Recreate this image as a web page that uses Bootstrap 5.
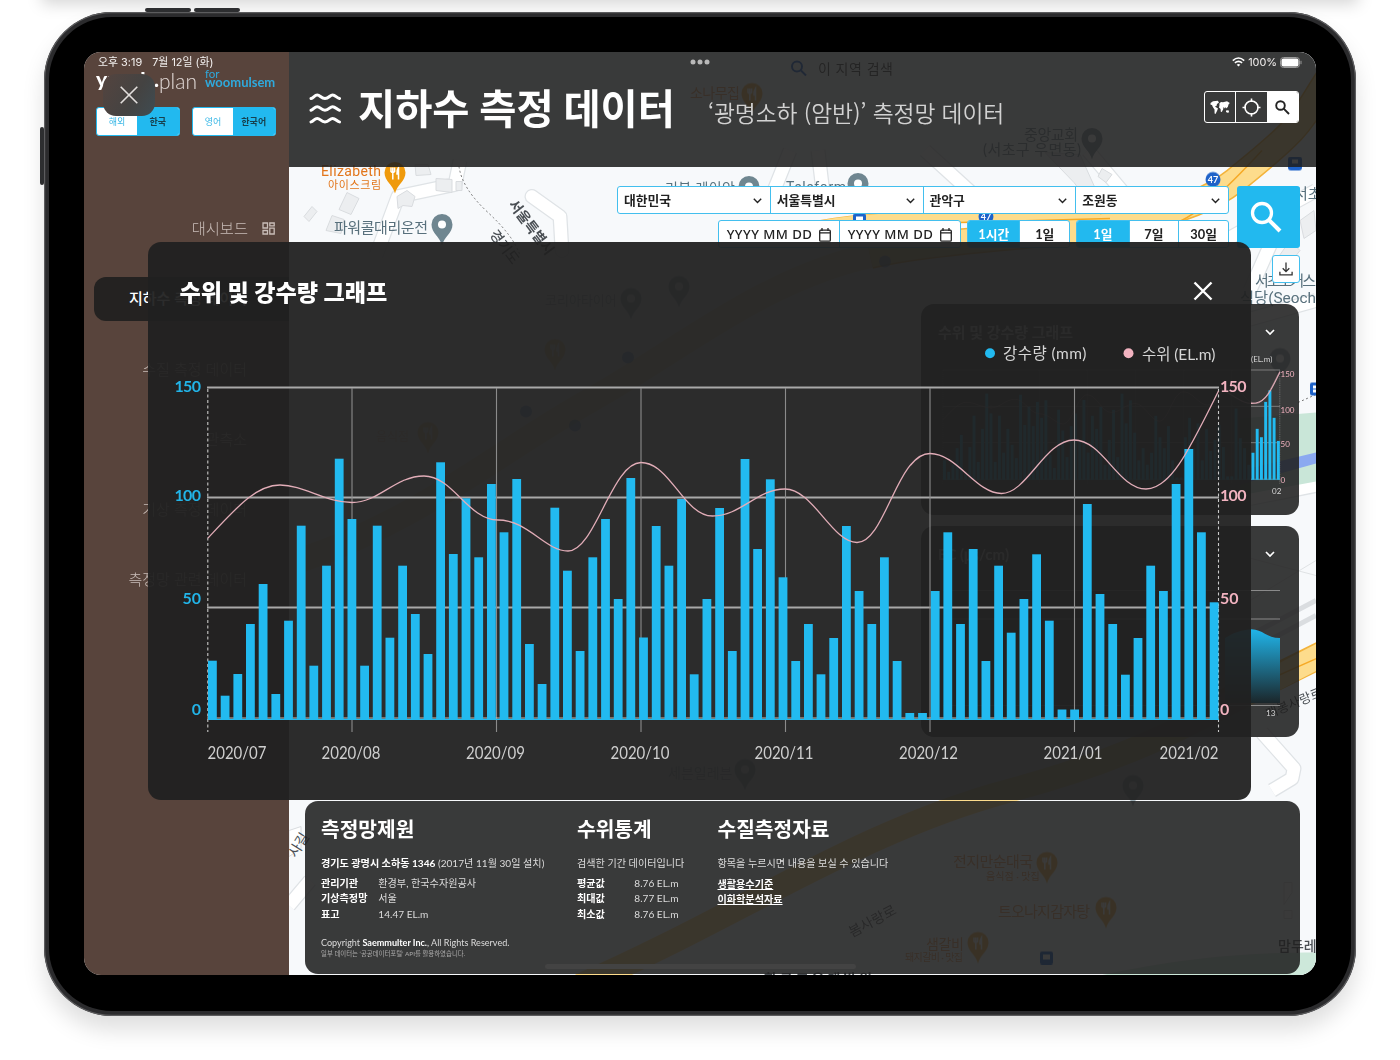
<!DOCTYPE html>
<html lang="ko">
<head>
<meta charset="utf-8">
<meta name="viewport" content="width=device-width, initial-scale=1">
<title>지하수 측정 데이터</title>
<link href="https://cdn.jsdelivr.net/npm/bootstrap@5.3.0/dist/css/bootstrap.min.css" rel="stylesheet">
<style>
:root{--cy:#22b9ef;--pk:#f2b3c0}
html,body{height:1060px;overflow:hidden}
body{background:#fff;font-family:Lato,"Noto Sans CJK KR",sans-serif;line-height:1;position:relative}
.topfade{position:absolute;left:50px;right:50px;top:-20px;height:16px;box-shadow:0 0 16px 8px rgba(0,0,0,.17)}
.device{position:relative;width:1312px;height:1004px;margin:11.5px 0 0 44px;padding:5px;border-radius:68px;background:#2b2b2d;box-shadow:inset 0 0 0 1.2px #5c5c5e,0 14px 22px rgba(0,0,0,.13)}
.side-btn{position:absolute;background:#2d2e30;border-radius:2px}
.bezel{height:100%;background:#000;border-radius:63px;padding:35px 35px 35.5px 35px}
.screen{position:relative;width:1232px;height:923px;border-radius:17px;overflow:hidden;background:#f6f8fa}
.map{position:absolute;left:205px;top:0}
.status{position:absolute;left:0;right:0;top:0;height:21px;padding:0 14px 0 14px;color:#f4f1f0;font-family:Inter,"Noto Sans CJK KR",sans-serif;font-size:10.9px;z-index:4}
.status>div{flex:1}
.sidebar{width:205px;background:#58443c;z-index:1}
.brand{height:55.500px;padding:17px 0 0 12px;color:#fff}
.brand-a{font-size:21px;font-weight:900;width:63px;height:22px;overflow:hidden;line-height:14px;margin-top:3px}
.brand-b{font-size:21px;font-weight:300;color:#e2dad7;width:46px;line-height:24px}
.brand-c{font-size:13px;font-weight:700;color:#2fa9dc;line-height:9.5px}
.brand-c small{font-size:11.5px;font-weight:400;display:block}
.hide-btn{position:absolute;left:19px;top:22px;width:52px;height:42px;border-radius:13px;background:linear-gradient(120deg,#54443f,#444342 60%,#3f4c52);z-index:3}
.tog{width:83.500px;height:28.500px;border:1px solid var(--cy);border-radius:3px;overflow:hidden;font-size:9px;background:#fff}
.tog span{display:flex;align-items:center;justify-content:center;color:#38b7e6;width:40px}
.tog span.on{background:var(--cy);color:#17414f;font-weight:700;flex:1}
.menu{padding-top:71px}
.menu a{height:44px;margin-bottom:26.3px;padding-right:42px;display:flex;align-items:center;justify-content:flex-end;color:#c9bdb8;text-decoration:none;font-size:15px;font-weight:300;position:relative;margin-left:10px}
.menu a.on{background:#242221;color:#fff;font-weight:500;border-radius:12px 0 0 12px}
.menu a.first{padding-right:14px;gap:14px;font-size:15.300px}
.head{height:115px;background:rgba(31,31,31,.88);padding:0 17px 0 20px;color:#fff}
.head h1{font-size:40.4px;font-weight:700;margin:0 0 0 16px;line-height:50px;white-space:nowrap}
.head h2{font-size:22.8px;font-weight:350;font-family:"Noto Sans CJK KR",sans-serif;letter-spacing:-.1px;margin:8px 0 0 33px;color:#d2d2d2;line-height:30px;white-space:nowrap}
.tri{width:95px;height:32px;border:1.5px solid #fff;border-radius:3px;overflow:hidden;margin-top:-4px}
.tri span{flex:1;display:flex;align-items:center;justify-content:center;border-right:1.5px solid #fff}
.tri span:last-child{background:#fff;border:0}
.filters{padding:19.500px 16.500px 0 0}
.fbox{border:1.3px solid #43bfee;border-radius:3px;background:#fff;height:28px;overflow:hidden;color:#222;font-weight:700;font-size:12.8px}
.fbox>span{display:flex;align-items:center;justify-content:center;border-right:1.3px solid #43bfee;flex:1 1 0;padding-top:1px}
.fbox>span:last-child{border-right:0}
.fbox .on{background:var(--cy);color:#fff;flex-grow:1.06}
.fbox.sel>span{justify-content:space-between;padding:1px 8px 0 6px}
.fbox.date>span{gap:7px;font-weight:500;font-size:13.200px;letter-spacing:.45px;font-family:"Noto Sans",sans-serif;white-space:nowrap}
.big-search{width:63px;height:62px;background:var(--cy);border-radius:3px}
.dl{width:28px;height:28px;border:1.5px solid #43bfee;border-radius:3px;background:#fff;margin-top:7px}
.tile{background:rgba(31,31,31,.88);border-radius:13px;width:378px;height:211px;overflow:hidden;color:#fff}
.tile-top{height:58px;padding:0 24px 0 17px;font-size:15px;font-weight:700}
.tile-top span{opacity:.8}
.info{background:rgba(31,31,31,.88);border-radius:13px;width:994.5px;height:172.5px;color:#fff;padding:16px 0 0 16px;font-size:10.1px}
.info h3{font-size:20.3px;font-weight:700;line-height:24px;margin:0 0 15px}
.info .ln{height:15.4px;line-height:15.4px;color:#dcdcdc;white-space:nowrap;display:flex}
.info b{color:#fff;font-weight:700}
.info .ln b.k{width:57.3px}
.info .first{margin-bottom:4.500px}
.home{position:absolute;left:461px;bottom:6px;width:311px;height:5px;border-radius:3px;background:#434343}
.sheet{position:absolute;left:63.5px;top:190.5px;width:1103.5px;height:557.500px;border-radius:13px;background:rgba(33,33,33,.95);z-index:5;color:#fff}
.sheet-top{height:68px;padding:30px 38px 0 32px}
.sheet-top h4{font-size:23.1px;font-weight:900;margin:0;line-height:40px}
svg{display:block;flex:none}
svg text{font-family:Lato,"Noto Sans CJK KR",sans-serif}
</style>
<script src="https://cdn.jsdelivr.net/npm/bootstrap@5.3.0/dist/js/bootstrap.bundle.min.js"></script>
</head>
<body>
<div class="topfade"></div>
<div class="device">
  <i class="side-btn" style="left:101px;top:-4px;width:46px;height:4px"></i>
  <i class="side-btn" style="left:150px;top:-4px;width:46px;height:4px"></i>
  <i class="side-btn" style="left:-4px;top:115px;width:4px;height:58px"></i>
  <div class="bezel">
    <div class="screen d-flex">
      <svg class="map" width="1027" height="923" viewBox="289 51.5 1027 923">
        <rect x="289" y="51" width="1027" height="925" fill="#f7f9fb"/>
        <g fill="none" stroke="#dfe3e6" stroke-width="15" stroke-linejoin="round">
          <path d="M376 255L398 196L455 184L460 160"/><path d="M532 196L560 216L562 250" stroke-linecap="round"/>
          <path d="M925 150L980 200M1088 150L1130 200M770 200L790 150M824 200L818 150M1225 240L1316 190M1290 200L1250 290M1245 320L1316 300M1240 500L1316 485M1262 732L1294 768L1292 778L1272 790M289 905L310 880"/>
        </g>
        <g fill="none" stroke="#fff" stroke-width="12.5" stroke-linejoin="round">
          <path d="M376 255L398 196L455 184L460 160"/><path d="M532 196L560 216L562 250" stroke-linecap="round"/>
          <path d="M925 150L980 200M1088 150L1130 200M770 200L790 150M824 200L818 150M1225 240L1316 190M1290 200L1250 290M1245 320L1316 300M1240 500L1316 485M1262 732L1294 768L1292 778L1272 790M289 905L310 880"/>
        </g>
        <g fill="#eceef0" stroke="#d9dcdf">
          <path d="M347 192l12 6-8 16-12-5zM312 206l5 5-8 10-5-5zM332 215l12 4-3 14-15-3zM397 196l10-6 8 6-3 10-9-1-5 3zM415 164h13l3 10-15 1zM436 178l16 1v13l-16-2zM456 181h6v9h-6zM1045 152l35 2 18 40-12 4-12-16zM1102 168l10 6-6 8-8-6zM1270 205l14 10-6 14-12-10zM1300 220l14-10 2 20-12 8zM1290 240l10 10-14 18-10-8z"/>
          <path d="M289 830l12-4v22l-12 8zM1284 882h8v10l-8 12zM1284 910h8v8h-8z" fill="#fff"/>
        </g>
        <path d="M1240 418L1316 412V481L1240 495Z" fill="#c9e6d8"/><path d="M1240 470L1316 452V463L1240 484Z" fill="#8ba9f0"/>
        <path d="M1100 975C1180 958 1240 952 1316 952V976H1100Z" fill="#cde8da"/>
        <g fill="none">
          <path d="M300 560C420 520 500 450 590 400S760 280 870 255" stroke="#fbe9c0" stroke-width="25"/>
          <g stroke="#f3b33b" stroke-width="27"><path d="M870 255C980 230 1160 240 1235 180S1300 120 1330 75"/><path d="M1180 724L1330 650"/></g>
          <path d="M780 235Q830 220 900 218T1100 213" stroke="#f3b33b" stroke-width="12"/>
          <g stroke="#fddc8c" stroke-width="24"><path d="M870 255C980 230 1160 240 1235 180S1300 120 1330 75"/><path d="M580 985C740 915 860 830 1010 790S1220 705 1330 650"/></g>
          <path d="M780 235Q830 220 900 218T1100 213" stroke="#fddc8c" stroke-width="11"/>
        </g>
        <path d="M1160 230C1200 215 1225 190 1262 150M1240 692L1330 652M960 222L1110 218" fill="none" stroke="#f6a925" stroke-width="1.5"/>
        <path d="M1240 640L1316 600M1240 655L1316 615" fill="none" stroke="#dadde0" stroke-width="5"/>
        <path d="M1240 555L1316 575M1250 600L1316 560" fill="none" stroke="#e0e3e5"/>
        <path d="M459 166Q462 188 488 212T520 255M1298 402L1316 394" fill="none" stroke="#777" stroke-dasharray="2 2.4"/>
        <defs>
          <g id="pin"><path d="M0 17C-2 8-10.500 5-10.500-4A10.500 10.500 0 0 1 10.500-4C10.500 5 2 8 0 17Z"/><circle cy="-4" r="4" fill="#fff"/></g>
          <g id="food"><path fill="#ef9a0c" d="M0 17C-2 8-10.500 5-10.500-4A10.500 10.500 0 0 1 10.500-4C10.500 5 2 8 0 17Z"/><path d="M-4-9v4q1.800 2 3.600 0v-4M-2.200-9V3M3.500 3V-9Q1.500-6 2-2.500h1.500" fill="none" stroke="#fff" stroke-width="1.500"/></g>
        </defs>
        <g fill="#6f8690"><use href="#pin" x="442" y="228"/><use href="#pin" x="749" y="190"/><use href="#pin" x="858" y="187"/><use href="#pin" x="1092" y="142" opacity=".8"/>
          <g opacity=".65"><use href="#pin" x="631" y="302"/><use href="#pin" x="679" y="290"/><use href="#pin" x="1133" y="789"/><use href="#pin" x="745" y="773"/><use href="#pin" x="1280" y="362"/></g></g>
        <use href="#food" x="395" y="176"/>
        <g opacity=".7"><use href="#food" x="752" y="97"/><use href="#food" x="1047" y="866"/><use href="#food" x="1106" y="911"/><use href="#food" x="978" y="946"/></g>
        <g opacity=".45"><use href="#food" x="428" y="436"/><use href="#food" x="555" y="353"/></g>
        <g fill="#1e62c9"><rect x="1288" y="156" width="14" height="14" rx="3"/><rect x="1310" y="382" width="13" height="13" rx="2"/><rect x="853" y="213" width="13" height="12" rx="2"/><rect x="1040" y="951" width="13" height="13" rx="2"/><circle cx="1213" cy="179" r="7.500"/><circle cx="986" cy="216" r="7.500"/><g opacity=".5"><circle cx="885" cy="261" r="6"/><circle cx="628" cy="357" r="6"/><circle cx="526" cy="411" r="6"/><circle cx="575" cy="425" r="6"/></g></g>
        <path d="M856 216h7v4h-7zM1292 159h6v4h-6zM1043 954h7v5h-7zM1313 385h6v3h-6zM1313 389h6v3h-6z" fill="#fff"/>
        <g fill="#fff" font-size="9" font-weight="700" text-anchor="middle"><text x="1213" y="182.500">47</text><text x="986" y="219.500">47</text></g>
        <g fill="#e2761b"><text x="321" y="175" font-size="14" textLength="60" style="font-family:Roboto">Elizabeth</text><text x="328" y="188" font-size="11" textLength="53">아이스크림</text>
          <g opacity=".65"><text x="690" y="97" font-size="14" textLength="50">소나무집</text><text x="953" y="866" font-size="15" textLength="80">전지만순대국</text><text x="986" y="879" font-size="10">음식점 · 맛집</text><text x="998" y="916" font-size="15" textLength="92">트오나지감자탕</text><text x="926" y="948" font-size="14" textLength="38">샘갈비</text><text x="905" y="960" font-size="10" textLength="58">돼지갈비 · 맛집</text><text x="376" y="440" font-size="12" opacity=".5">음식점</text></g></g>
        <g fill="#58707c" font-size="15"><text x="334" y="232" textLength="94">파워콜대리운전</text><text x="665" y="192" font-size="14" textLength="70">리북 레이앙</text><text x="786" y="191" font-size="14" textLength="60" style="font-family:Roboto">Teleform</text><g opacity=".75"><text x="1024" y="139" textLength="54">중앙교회</text><text x="983" y="154" textLength="98">(서초구 우면동)</text></g><text x="1294" y="198">서초</text><text x="1255" y="285" textLength="61">서초포커스</text><text x="1240" y="302" textLength="76" lengthAdjust="spacingAndGlyphs" style="font-family:Roboto,'Noto Sans CJK KR'">식당(Seoch</text><g opacity=".5"><text x="545" y="304" font-size="13">코리아타이어</text><text x="668" y="777" font-size="14">세븐일레븐</text></g></g>
        <g fill="#4a4f54" font-size="14"><text transform="translate(508 204) rotate(53)" font-weight="700">서울특별시</text><text transform="translate(489 234) rotate(53)" font-weight="500">경기도</text><text transform="translate(296 858) rotate(-58)">사길</text><text transform="translate(1268 718) rotate(-22)" font-size="13">매봉사랑로</text><text transform="translate(852 937) rotate(-28)" opacity=".8">봄사랑로</text><text x="1278" y="950" font-weight="500">맘두레</text><text x="764" y="983" font-weight="700" textLength="108">한국교육개발원</text></g>
        <text x="818" y="73" font-size="14" fill="#222" textLength="75" opacity=".8">이 지역 검색</text><g fill="none" stroke="#2b6fd6" stroke-width="2"><circle cx="797" cy="66" r="5"/><path d="M801 70l5 5"/></g>
      </svg>

      <div class="status d-flex align-items-center">
        <div class="d-flex" style="gap:10px"><span>오후 3:19</span><span>7월 12일 (화)</span></div>
        <svg width="22" height="6"><g fill="#b9b9b9"><circle cx="4" cy="3" r="2.500"/><circle cx="11" cy="3" r="2.500"/><circle cx="18" cy="3" r="2.500"/></g></svg>
        <div class="d-flex align-items-center justify-content-end" style="gap:3px">
          <svg width="13" height="10" viewBox="0 0 13 10" fill="none" stroke="#fff" stroke-width="1.600"><path d="M.8 3.600Q6.500-1.600 12.200 3.600M2.900 5.900Q6.500 2.700 10.100 5.900"/><path d="M4.700 7.700Q6.500 6.300 8.300 7.700L6.500 9.600Z" fill="#fff" stroke="none"/></svg>
          <span>100%</span>
          <svg width="22" height="11" viewBox="0 0 22 11"><rect x=".5" y=".5" width="19" height="10" rx="3" fill="none" stroke="#999"/><rect x="1.500" y="1.500" width="17" height="8" rx="2" fill="#fff"/><path d="M21 3.800v3.400" stroke="#999"/></svg>
        </div>
      </div>

      <aside class="sidebar d-flex flex-column flex-shrink-0">
        <div class="brand d-flex">
          <div class="brand-a d-flex justify-content-between"><span>yunsl</span><span>.</span></div><div class="brand-b">plan</div>
          <div class="brand-c"><small>for</small>woomulsem</div>
        </div>
        <button class="hide-btn border-0 d-flex align-items-center justify-content-center p-0"><svg width="18" height="18" viewBox="0 0 18 18" stroke="#e3dfdd" stroke-width="1.600"><path d="M.7.700L17.300 17.300M17.300.700L.7 17.300"/></svg></button>
        <div class="d-flex" style="gap:12.500px;padding-left:12px">
          <div class="tog d-flex"><span>해외</span><span class="on">한국</span></div>
          <div class="tog d-flex"><span>영어</span><span class="on">한국어</span></div>
        </div>
        <nav class="menu">
          <a href="#" class="first">대시보드 <svg width="13" height="13" viewBox="0 0 13 13" fill="none" stroke="#c9bdb8" stroke-width="1.300"><path d="M1 1h4.500v5H1zM7.800 1h4.400v2.800H7.800zM1 8.500h4.500v3.500H1zM7.800 6.200h4.400V12H7.800z"/></svg></a>
          <a href="#" class="on">지하수 측정 데이터</a>
          <a href="#">수질 측정 데이터</a>
          <a href="#">관측소</a>
          <a href="#">기상 측정 데이터</a>
          <a href="#">측정망 관련 데이터</a>
        </nav>
      </aside>

      <main class="d-flex flex-column position-relative flex-grow-1 align-items-end">
        <header class="head d-flex align-items-center w-100">
          <svg width="33" height="34" viewBox="0 0 33 34" fill="none" stroke="#fff" stroke-width="3" stroke-linecap="round" stroke-linejoin="round"><path id="wv" d="M2 6.500C4.500 6 5.500 3 8.300 3S12 6.500 16 6.500S20.800 3 23.600 3S28 6 30.500 6.500"/><use href="#wv" y="11.700"/><use href="#wv" y="23.400"/></svg>
          <h1>지하수 측정 데이터</h1>
          <h2>‘광명소하 (암반)’ 측정망 데이터</h2>
          <div class="tri d-flex ms-auto">
            <span><svg width="20" height="15" viewBox="0 0 20 15" fill="#fff"><path d="M.5 3L3 1.300L7.800.800L9 2.500L7 4L6.500 6L4.800 6.500L8 8.500L7 11L5.500 14L4.600 13.500L4.500 9.500L2.800 7L2 5L.6 4.800ZM9.500 5L9.300 3.500L11 2L13 2.200L17 1.200L19.800 3L18.500 4.500L17.800 7L16 8.500L15.200 7L14.300 8.500L13.200 6.800L13.300 9L11.800 12L10.800 11.800L10.600 9L9 7.500ZM16 10.500L18.500 10.300L19.200 12.300L17.500 12.800L16 12Z"/></svg></span>
            <span><svg width="19" height="19" viewBox="0 0 19 19" fill="none" stroke="#fff" stroke-width="1.600"><circle cx="9.500" cy="9.500" r="6.500"/><path d="M9.500.500v3.500M9.500 15v3.500M.5 9.500h3.500M15 9.500h3.500"/></svg></span>
            <span><svg width="15" height="15" viewBox="0 0 15 15" fill="none" stroke="#222" stroke-width="1.900"><circle cx="5.500" cy="5.500" r="4.300"/><path d="M8.700 8.700L14 14"/></svg></span>
          </div>
        </header>

        <section class="filters d-flex" style="gap:7.500px;height:117px">
          <div class="d-flex flex-column align-items-end" style="gap:6px">
            <div class="fbox sel d-flex" style="width:612px">
              <span>대한민국 <svg width="9" height="6" fill="none" stroke="#222" stroke-width="1.400"><path d="M.8.800L4.500 4.500L8.200.800"/></svg></span>
              <span>서울특별시 <svg width="9" height="6" fill="none" stroke="#222" stroke-width="1.400"><path d="M.8.800L4.500 4.500L8.200.800"/></svg></span>
              <span>관악구 <svg width="9" height="6" fill="none" stroke="#222" stroke-width="1.400"><path d="M.8.800L4.500 4.500L8.200.800"/></svg></span>
              <span>조원동 <svg width="9" height="6" fill="none" stroke="#222" stroke-width="1.400"><path d="M.8.800L4.500 4.500L8.200.800"/></svg></span>
            </div>
            <div class="d-flex" style="gap:6px">
              <div class="fbox date d-flex" style="width:243px">
                <span>YYYY MM DD <svg width="12" height="14" viewBox="0 0 12 14" fill="none" stroke="#222" stroke-width="1.300"><rect x=".7" y="2.200" width="10.600" height="11" rx="1"/><path d="M.7 4.800h10.600M3 0v3M9 0v3"/></svg></span>
                <span>YYYY MM DD <svg width="12" height="14" viewBox="0 0 12 14" fill="none" stroke="#222" stroke-width="1.300"><rect x=".7" y="2.200" width="10.600" height="11" rx="1"/><path d="M.7 4.800h10.600M3 0v3M9 0v3"/></svg></span>
              </div>
              <div class="fbox d-flex" style="width:103px"><span class="on">1시간</span><span>1일</span></div>
              <div class="fbox d-flex" style="width:153px"><span class="on">1일</span><span>7일</span><span>30일</span></div>
            </div>
          </div>
          <div class="d-flex flex-column align-items-end">
            <div class="big-search d-flex align-items-center justify-content-center pe-1"><svg width="32" height="32" viewBox="0 0 32 32" fill="none" stroke="#fff" stroke-width="3.300"><circle cx="12" cy="12" r="9.500"/><path d="M18.800 18.800L30 30" stroke-width="4"/></svg></div>
            <div class="dl d-flex align-items-center justify-content-center"><svg width="14" height="14" viewBox="0 0 14 14" fill="none" stroke="#333" stroke-width="1.300"><path d="M7 .5v9M3.700 6.300L7 9.600L10.300 6.300M.9 9.800v3h12.200v-3"/></svg></div>
          </div>
        </section>

        <section class="d-flex flex-column" style="gap:11px;padding:20px 17px 0 0">
          <div class="tile">
            <div class="tile-top d-flex align-items-center justify-content-between"><span>수위 및 강수량 그래프</span><svg width="10" height="7" fill="none" stroke="#fff" stroke-width="1.700"><path d="M1 1L5 5L9 1"/></svg></div>
            <svg width="378" height="153" viewBox="921 361 378 153" style="overflow:visible">
              <use href="#plot" transform="translate(943 369) scale(.3333 .3303) translate(-208 -387.500)"/>
              <path d="M1220 387C1240 399 1245 404 1256 402S1272 387 1280 371" fill="none" stroke="#e2adb8" stroke-width="1.100"/>
              <g font-size="8" fill="#f2b3c0"><text x="1280.500" y="375.500">150</text><text x="1280.500" y="411.500">100</text><text x="1280.500" y="445.500">50</text><text x="1280.500" y="481.500">0</text></g>
              <g font-size="8" fill="#d5d5d5"><text x="1272" y="493">02</text><text x="1251" y="361">(EL.m)</text></g>
            </svg>
          </div>
          <div class="tile">
            <div class="tile-top d-flex align-items-center justify-content-between"><span>EC (㎲/cm)</span><svg width="10" height="7" fill="none" stroke="#fff" stroke-width="1.700"><path d="M1 1L5 5L9 1"/></svg></div>
            <svg width="378" height="153" viewBox="921 583 378 153">
              <defs><linearGradient id="ar" x1="0" y1="0" x2="0" y2="1"><stop offset="0" stop-color="#20b5ea"/><stop offset="1" stop-color="#1b262a"/></linearGradient></defs>
              <path d="M943 589.500H1280M943 618H1280M943 704.500H1280" stroke="#8a8a8a"/>
              <path d="M1225 637C1235 631 1240 630 1245 629C1262 625 1264 637 1280 637V702H1225Z" fill="url(#ar)"/>
              <text x="1266" y="715" font-size="8" fill="#d5d5d5">13</text>
            </svg>
          </div>
        </section>

        <section class="info d-flex position-relative" style="margin:64.500px 16.500px 0 0">
          <div style="width:256px">
            <h3>측정망제원</h3>
            <div class="ln first"><b>경기도 광명시 소하동 1346</b>&nbsp;(2017년 11월 30일 설치)</div>
            <div class="ln"><b class="k">관리기관</b>환경부, 한국수자원공사</div>
            <div class="ln"><b class="k">기상측정망</b>서울</div>
            <div class="ln"><b class="k">표고</b>14.47 EL.m</div>
            <div class="ln" style="font-size:9.050px;margin-top:13px;height:13px">Copyright&nbsp;<b>Saemmulter Inc.</b>, All Rights Reserved.</div>
            <div class="ln" style="font-size:6.400px;height:11px;line-height:11px;color:#aaa">일부 데이터는 ‘공공데이터포털’ API를 활용하였습니다.</div>
          </div>
          <div style="width:140.500px">
            <h3>수위통계</h3>
            <div class="ln first">검색한 기간 데이터입니다</div>
            <div class="ln"><b class="k">평균값</b>8.76 EL.m</div>
            <div class="ln"><b class="k">최대값</b>8.77 EL.m</div>
            <div class="ln"><b class="k">최소값</b>8.76 EL.m</div>
          </div>
          <div>
            <h3>수질측정자료</h3>
            <div class="ln first" style="margin-bottom:5.500px">항목을 누르시면 내용을 보실 수 있습니다</div>
            <div class="ln"><b class="text-decoration-underline">생활용수기준</b></div>
            <div class="ln"><b class="text-decoration-underline">이화학분석자료</b></div>
          </div>
        </section>
      </main>
      <div class="home"></div>

      <div class="sheet d-flex flex-column">
        <div class="sheet-top d-flex justify-content-between">
          <h4>수위 및 강수량 그래프</h4>
          <svg width="20" height="20" viewBox="0 0 20 20" stroke="#fff" stroke-width="2.400" style="margin-top:8.500px"><path d="M1.500 1.500L18.500 18.500M18.500 1.500L1.500 18.500"/></svg>
        </div>
        <svg width="1103" height="489" viewBox="148 310 1103 489">
          <g id="plot">
            <path d="M207 387.500H1219M207 497.500H1219M207 607.500H1219" stroke="#a9a9a9" stroke-width="1.800"/>
            <path d="M352 388V732M496.500 388V732M641 388V732M785.500 388V732M930 388V732M1074.500 388V732" stroke="#8b8b8b" stroke-width="1.100"/>
            <path d="M207.800 389V732M1218.500 389V732" stroke="#c9c9c9" stroke-width="1.100" stroke-dasharray="3 2.500"/>
            <path d="M207 718H1219" stroke="#d9b5a5" stroke-width="1.200"/>
            <g id="bars" fill="#22baf0"></g>
            <path d="M208 719.300H1219" stroke="#22baf0" stroke-width="1.200"/>
            <path d="M208 538C236 508 256 485 280 485S325 502.500 352 502.500S395 476 424 476S468 520 498 520S545 551 568 551C595 551 612 462.500 641 462.500S684 516 712.500 516S757 489 785 489S832 542.500 857 542.500C885 542.500 897 453.500 930 453.500C957 453.500 976 493.500 1001.500 493.500S1045 440 1074 440S1118 489 1146 489C1171 489 1190 448 1218.500 391" fill="none" stroke="#e2adb8" stroke-width="1.300"/>
          </g>
          <g font-size="16" font-weight="700" fill="#22b4e8" text-anchor="end"><text x="201" y="392" textLength="26.500">150</text><text x="201" y="500.500" textLength="26.500">100</text><text x="201" y="604">50</text><text x="201" y="714.500">0</text></g>
          <g font-size="16" font-weight="700" fill="#f2b3c0"><text x="1220" y="392" textLength="26.500">150</text><text x="1220" y="500.500" textLength="26.500">100</text><text x="1220" y="604">50</text><text x="1220" y="714.500">0</text></g>
          <g font-size="16.500" fill="#cfcfcf"><text x="207.500" y="758.500" textLength="59" lengthAdjust="spacingAndGlyphs">2020/07</text><g text-anchor="middle"><text x="351" y="758.500" textLength="59" lengthAdjust="spacingAndGlyphs">2020/08</text><text x="495.500" y="758.500" textLength="59" lengthAdjust="spacingAndGlyphs">2020/09</text><text x="640" y="758.500" textLength="59" lengthAdjust="spacingAndGlyphs">2020/10</text><text x="784" y="758.500" textLength="59" lengthAdjust="spacingAndGlyphs">2020/11</text><text x="928.500" y="758.500" textLength="59" lengthAdjust="spacingAndGlyphs">2020/12</text><text x="1073" y="758.500" textLength="59" lengthAdjust="spacingAndGlyphs">2021/01</text><text x="1189" y="758.500" textLength="59" lengthAdjust="spacingAndGlyphs">2021/02</text></g></g>
          <circle cx="990" cy="353.300" r="5" fill="#22baf0"/><circle cx="1128.500" cy="353.300" r="5" fill="#f2b3c0"/>
          <g font-size="15.500" fill="#d6d6d6"><text x="1003" y="358.500" textLength="83.500">강수량 (mm)</text><text x="1142" y="359.500" textLength="73.500">수위 (EL.m)</text></g>
        </svg>
      </div>
    </div>
  </div>
</div>
<script>
const tops=[660.7,695.7,674,624,584,694,620.7,525.7,665.7,565.7,458.7,519,665.7,525.7,637.7,565.7,614,654,462.3,554,498.3,557.3,484,532.3,479,644,684,507.7,570.7,651,557.3,519,599,478,637.5,526,565.7,499,674.3,599,508,651,459,549,479.3,577.3,661,624,674.3,638,526,591,624,557.3,661,713,713,591,532.3,624,549,661,565.7,632.7,599,554.3,620.7,709.5,709.5,504,594,624,674.7,638,565.7,591,484,449,532.3,602.3];
document.getElementById('bars').innerHTML=tops.map((t,i)=>`<rect x="${(208+i*12.68).toFixed(1)}" y="${t}" width="8.8" height="${(719.7-t).toFixed(1)}"/>`).join('');
</script>
</body>
</html>
